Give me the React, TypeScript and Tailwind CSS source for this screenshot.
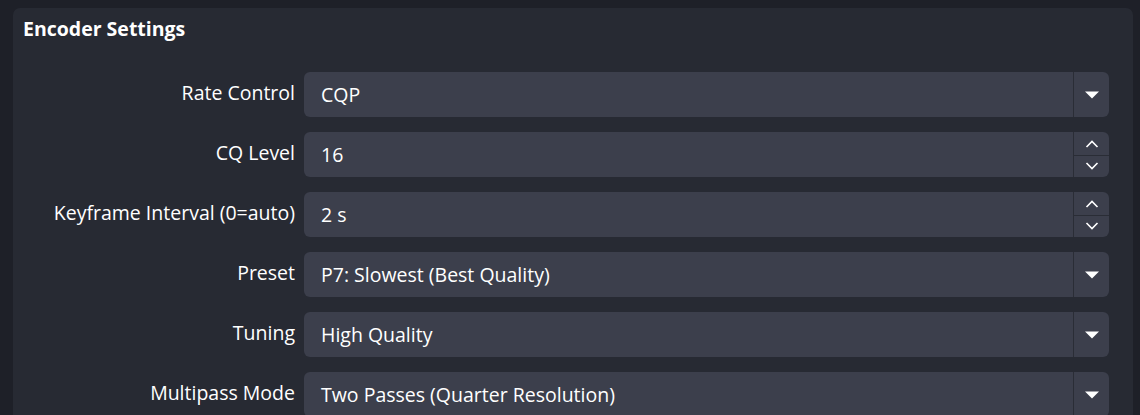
import React from "react";

type Row = {
  label: string;
  value: string;
  kind: "select" | "spin";
};

const rows: Row[] = [
  { label: "Rate Control", value: "CQP", kind: "select" },
  { label: "CQ Level", value: "16", kind: "spin" },
  { label: "Keyframe Interval (0=auto)", value: "2 s", kind: "spin" },
  { label: "Preset", value: "P7: Slowest (Best Quality)", kind: "select" },
  { label: "Tuning", value: "High Quality", kind: "select" },
  { label: "Multipass Mode", value: "Two Passes (Quarter Resolution)", kind: "select" },
];

function Caret() {
  return (
    <svg width="14" height="8" viewBox="0 0 14 8">
      <path d="M0 0.5 H14 L7 7.5 Z" fill="#ffffff" />
    </svg>
  );
}

function Chevron({ up }: { up?: boolean }) {
  return (
    <svg width="14" height="8" viewBox="0 0 14 8">
      <path
        d={up ? "M1.5 7 L7 1.5 L12.5 7" : "M1.5 1 L7 6.5 L12.5 1"}
        fill="none"
        stroke="#ffffff"
        strokeWidth="1.6"
      />
    </svg>
  );
}

function Field({ row }: { row: Row }) {
  return (
    <div className="flex h-[45px] flex-1 rounded-[6px] bg-[#3c3f4c]">
      <div className="flex flex-1 items-center pl-[17px] text-[19.5px] text-white">
        {row.value}
      </div>
      <div className="w-px bg-[#2a2d36]" />
      {row.kind === "select" ? (
        <div className="flex w-[35px] items-center justify-center">
          <Caret />
        </div>
      ) : (
        <div className="flex w-[35px] flex-col">
          <div className="flex flex-1 items-center justify-center pt-[1px]">
            <Chevron up />
          </div>
          <div className="h-px bg-[#2a2d36]" />
          <div className="flex flex-1 items-center justify-center">
            <Chevron />
          </div>
        </div>
      )}
    </div>
  );
}

export default function App() {
  return (
    <main
      className="h-[415px] overflow-hidden bg-[#1e2028] pl-[13px] pr-[7px] pt-[8px]"
      style={{ fontFamily: '"Open Sans", "Noto Sans", sans-serif' }}
    >
      <section className="h-[500px] rounded-t-[7px] bg-[#272a33]">
        <h1 className="pl-[10px] pt-[8px] text-[19.5px] font-bold leading-[26px] text-white">
          Encoder Settings
        </h1>
        <div className="mt-[30px] flex flex-col gap-[15px] pr-[24px]">
          {rows.map((row) => (
            <div key={row.label} className="flex items-center">
              <div className="w-[282px] pb-[3px] text-right text-[19.5px] text-white">
                {row.label}
              </div>
              <div className="ml-[9px] flex flex-1">
                <Field row={row} />
              </div>
            </div>
          ))}
        </div>
      </section>
    </main>
  );
}
